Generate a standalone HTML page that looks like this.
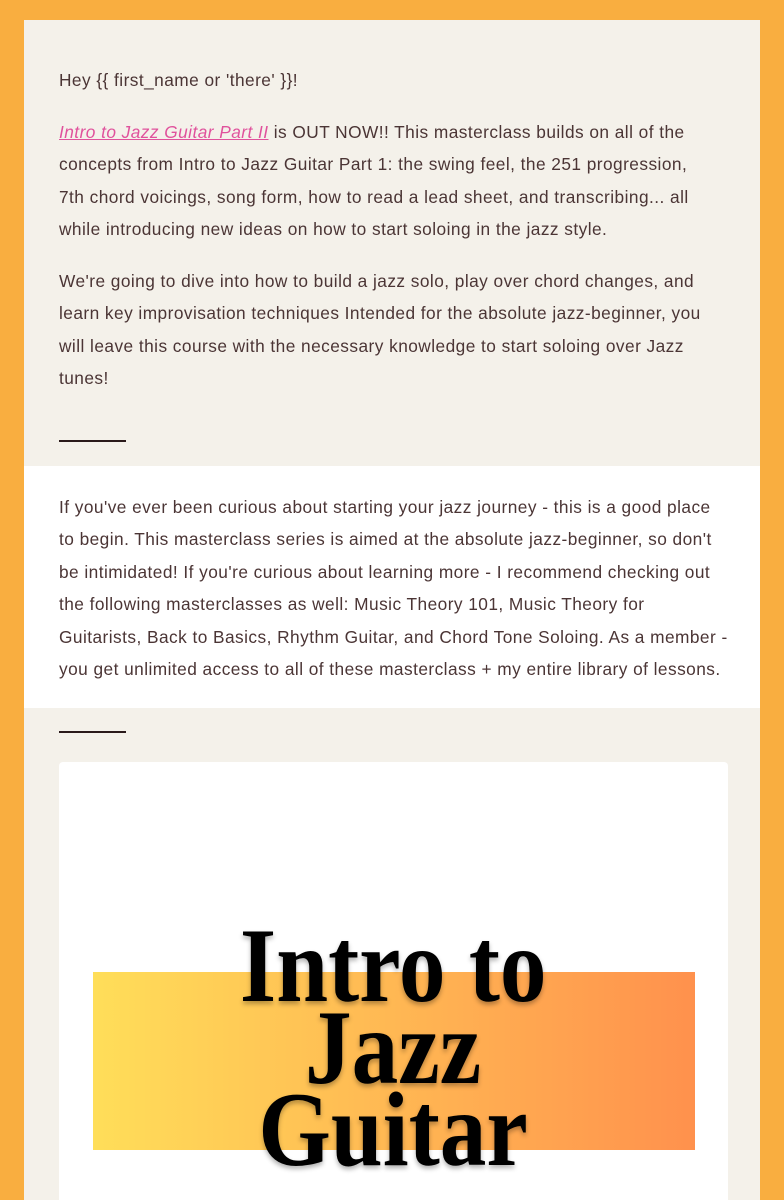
<!DOCTYPE html>
<html><head><meta charset="utf-8"><style>
html,body{margin:0;padding:0;width:784px;height:1200px;overflow:hidden;}
body{background:#F9AE40;font-family:"Liberation Sans",sans-serif;position:relative;}
.wrap{position:absolute;left:24px;top:20px;width:736px;height:1180px;background:#F4F1EA;overflow:hidden;}
.t{position:absolute;left:35px;font-size:17.3px;color:#4b3535;line-height:32.4px;white-space:nowrap;letter-spacing:0.45px;}
.t a{color:#e0529c;font-style:italic;text-decoration:underline;}
.div{position:absolute;left:35px;width:67px;height:2px;background:#2a1a1a;}
.white{position:absolute;left:0;top:446px;width:736px;height:242px;background:#fff;}
.card{position:absolute;left:35px;top:742px;width:669px;height:438px;background:#fff;border-radius:4px 4px 0 0;}
.grad{position:absolute;left:34px;top:210px;width:602px;height:178px;background:linear-gradient(90deg,#FFDE59,#FF914D);}
.title{position:absolute;left:0;width:669px;text-align:center;font-family:"Liberation Serif",serif;font-weight:bold;font-size:106px;color:#000;text-shadow:0 3px 5px rgba(0,0,0,.3);white-space:nowrap;}
.title span{display:inline-block;transform:scaleX(0.88);}
</style></head><body>
<div class="wrap">
<div class="t" style="top:44px">Hey {{ first_name or 'there' }}!</div>
<div class="t" style="top:96px"><a>Intro to Jazz Guitar Part II</a> is OUT NOW!! This masterclass builds on all of the<br>concepts from Intro to Jazz Guitar Part 1: the swing feel, the 251 progression,<br>7th chord voicings, song form, how to read a lead sheet, and transcribing... all<br>while introducing new ideas on how to start soloing in the jazz style.</div>
<div class="t" style="top:245px">We're going to dive into how to build a jazz solo, play over chord changes, and<br>learn key improvisation techniques Intended for the absolute jazz-beginner, you<br>will leave this course with the necessary knowledge to start soloing over Jazz<br>tunes!</div>
<div class="div" style="top:420px"></div>
<div class="white"></div>
<div class="t" style="top:471px">If you've ever been curious about starting your jazz journey - this is a good place<br>to begin. This masterclass series is aimed at the absolute jazz-beginner, so don't<br>be intimidated! If you're curious about learning more - I recommend checking out<br>the following masterclasses as well: Music Theory 101, Music Theory for<br>Guitarists, Back to Basics, Rhythm Guitar, and Chord Tone Soloing. As a member -<br>you get unlimited access to all of these masterclass + my entire library of lessons.</div>
<div class="div" style="top:711px"></div>
<div class="card">
<div class="grad"></div>
<div class="title" style="top:152px;line-height:104px"><span>Intro to</span></div>
<div class="title" style="top:234px;line-height:104px"><span>Jazz</span></div>
<div class="title" style="top:316px;line-height:104px"><span>Guitar</span></div>
</div>
</div>
</body></html>
